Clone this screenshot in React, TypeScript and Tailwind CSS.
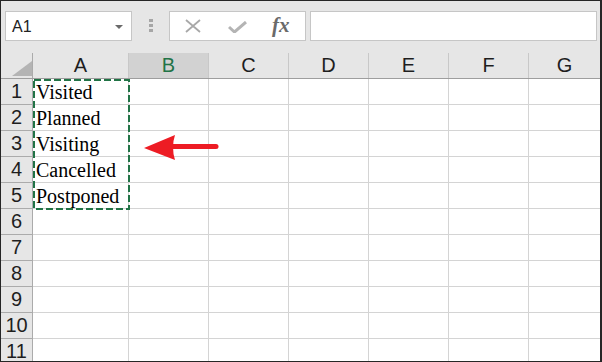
import React from "react";

const cols = ["A", "B", "C", "D", "E", "F", "G"];
const colW = ["w-[96px]", "w-[80px]", "w-[80px]", "w-[80px]", "w-[80px]", "w-[80px]", "flex-1"];
const data = ["Visited", "Planned", "Visiting", "Cancelled", "Postponed"];

export default function App() {
  const rows = Array.from({ length: 11 }, (_, i) => i + 1);
  return (
    <div className="relative w-[602px] h-[362px] overflow-hidden bg-[#e6e6e6] border-t border-l border-r-2 border-b border-[#262626] flex flex-col font-['Liberation_Sans',Arial,sans-serif]">
      {/* formula bar */}
      <div className="h-[52px] shrink-0 flex items-start pt-[10px] pl-[4px] pr-[3px]">
        <div className="w-[127px] h-[30px] bg-white border border-[#c6c6c6] flex items-center pl-[6px] pr-[8px] pt-[2px]">
          <span className="text-[16px] text-[#222] flex-1">A1</span>
          <div className="w-0 h-0 border-l-[4px] border-r-[4px] border-t-[4px] border-l-transparent border-r-transparent border-t-[#6a6a6a] mb-[1px]" />
        </div>
        <div className="ml-[17px] mt-[8px] flex flex-col gap-[2px]">
          <div className="w-[4px] h-[3px] bg-[#a6a6a6]" />
          <div className="w-[4px] h-[3px] bg-[#a6a6a6]" />
          <div className="w-[4px] h-[3px] bg-[#a6a6a6]" />
        </div>
        <div className="ml-[16px] w-[137px] h-[30px] bg-white border border-[#c6c6c6] flex items-center">
          <svg width="16" height="14" viewBox="0 0 16 14" className="ml-[15px]">
            <path d="M1 1 L15 13 M15 1 L1 13" stroke="#a8a8a8" strokeWidth="1.8" fill="none" />
          </svg>
          <svg width="19" height="12" viewBox="0 0 19 12" className="ml-[27px] mt-[2px]">
            <path d="M1 6 L6.5 11 L18 1" stroke="#b4b4b4" strokeWidth="3" fill="none" />
          </svg>
          <span className="ml-[25px] text-[21px] italic font-bold text-[#6a6a6a] font-['Liberation_Serif',serif] leading-none mb-[2px]">
            fx
          </span>
        </div>
        <div className="ml-[4px] flex-1 h-[30px] bg-white border border-[#c6c6c6]" />
      </div>

      {/* column header */}
      <div className="h-[26px] shrink-0 flex border-b border-[#9e9e9e]">
        <div className="w-[32px] shrink-0 border-r border-[#ababab] flex items-end justify-end pb-[2px]">
          <div className="w-[20px] h-[15px] bg-[#b4b4b4] [clip-path:polygon(100%_0,100%_100%,0_100%)]" />
        </div>
        {cols.map((c, i) => (
          <div
            key={c}
            className={`${colW[i]} shrink-0 ${i < 6 ? "border-r border-[#c8c8c8]" : ""} ${
              c === "B" ? "bg-[#d2d2d2] text-[#217346]" : "text-[#1e1e1e]"
            } flex items-center justify-center text-[20px] leading-[25px]`}
          >
            {c}
          </div>
        ))}
      </div>

      {/* rows */}
      <div className="flex flex-col">
        {rows.map((r) => (
          <div key={r} className="h-[26px] shrink-0 flex">
            <div className="w-[32px] shrink-0 border-r border-b border-[#ababab] flex items-center justify-center text-[20px] leading-[25px] text-[#1e1e1e]">
              {r}
            </div>
            {cols.map((c, i) => (
              <div
                key={c}
                className={`${colW[i]} shrink-0 bg-white border-b ${i < 6 ? "border-r" : ""} border-[#d4d4d4] flex items-center pl-[3px] pt-[1px] text-[20px] leading-[25px] text-black font-['Liberation_Serif','Times_New_Roman',serif]`}
              >
                {i === 0 && r <= 5 ? data[r - 1] : ""}
              </div>
            ))}
          </div>
        ))}
      </div>

      {/* copy marquee */}
      <svg className="absolute left-[32px] top-[78px]" width="97" height="131" viewBox="0 0 97 131">
        <rect x="1" y="1" width="95" height="129" fill="none" stroke="#217346" strokeWidth="2" strokeDasharray="7 3" />
      </svg>

      {/* red arrow */}
      <svg className="absolute left-[139px] top-[129px]" width="82" height="34" viewBox="0 0 82 34">
        <path d="M4 18 L35 5 Q31 17 35 30 Z" fill="#ed1c24" />
        <line x1="33" y1="16.5" x2="76" y2="16.5" stroke="#ed1c24" strokeWidth="5" strokeLinecap="round" />
      </svg>
    </div>
  );
}
